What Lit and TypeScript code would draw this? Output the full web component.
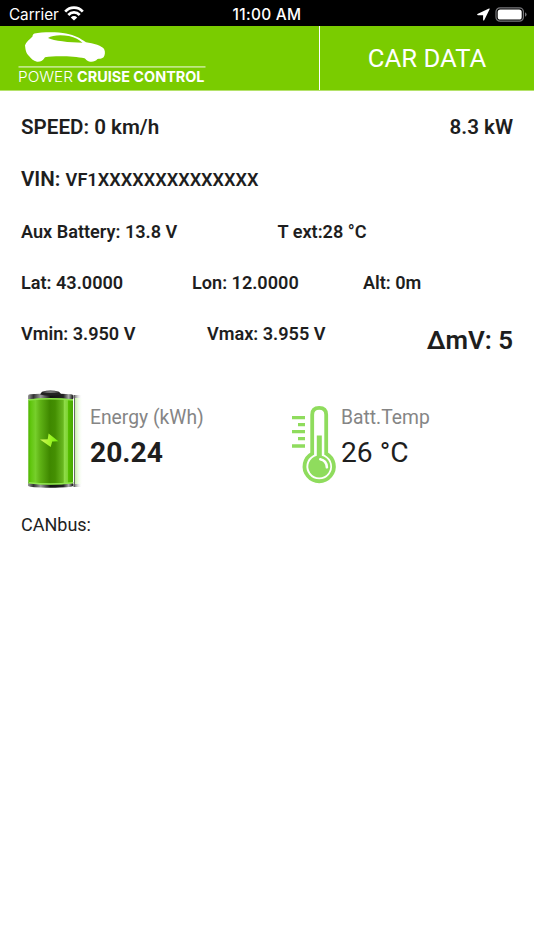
import { LitElement, html, css } from "lit";
import { customElement } from "lit/decorators.js";

@customElement("status-bar")
class StatusBar extends LitElement {
  static styles = css`
    :host { display: grid; grid-template-columns: 1fr auto 1fr; align-items: center; height: 26px; background: #000; color: #fff; font: 15.3px/26px Inter, sans-serif; }
    .left { display: flex; align-items: center; padding-left: 9px; gap: 5.5px; }
    .carrier { padding-top: 2px; letter-spacing: -.05px; }
    .time { font-weight: 500; padding-top: 2px; font-size: 15.4px; letter-spacing: .3px; }
    .right { display: flex; justify-content: flex-end; align-items: center; gap: 5px; padding-right: 7px; }
    svg { display: block; }
  `;
  render() {
    return html`
      <div class="left">
        <span class="carrier">Carrier</span>
        <svg width="20" height="16" viewBox="0 0 20 16" fill="none" stroke="#fff" stroke-width="2.7">
          <path d="M1.2 5.6C6 .4 14 .4 18.800 5.600" />
          <path d="M4.300 9C7.500 5.500 12.500 5.500 15.700 9" />
          <path d="M10 14.400L6.800 11.400C8.600 9.600 11.400 9.600 13.200 11.400Z" fill="#fff" stroke="none" />
        </svg>
      </div>
      <span class="time">11:00 AM</span>
      <div class="right">
        <svg width="13" height="13" viewBox="0 0 13 13"><path d="M.4 6L12 .5Q13 .2 12.600 1.300L7.200 12.200Q6.400 13.100 6.100 12V7.200H.9Q-.4 6.800 .4 6Z" fill="#fff" /></svg>
        <svg width="32" height="15" viewBox="0 0 32 15">
          <rect x="1" y=".8" width="27.4" height="13.4" rx="4" fill="none" stroke="#77777b" stroke-width="1.2" />
          <rect x="2.7" y="2.4" width="24" height="10.2" rx="2.6" fill="#fff" />
          <path d="M30 5.2Q31.6 6 31.6 7.5T30 9.8Z" fill="#77777b" />
        </svg>
      </div>
    `;
  }
}

@customElement("app-header")
class AppHeader extends LitElement {
  static styles = css`
    :host { display: flex; box-sizing: border-box; height: 65px; background: #7acc00; border-bottom: 1px solid #b4e26a; color: #fff; }
    .brand { flex: 0 0 320px; border-right: 1px solid #fff; box-sizing: border-box; }
    .title { flex: 1; display: flex; align-items: center; justify-content: center; font: 25.7px/66px Roboto, sans-serif; }
    svg { display: block; }
    .word { font-family: Inter, sans-serif; font-size: 14.2px; fill: #fff; }
    .thin { font-weight: 300; }
    .bold { font-weight: 700; }
  `;
  render() {
    return html`
      <div class="brand">
        <svg width="220" height="64" viewBox="0 26 220 64">
          <path fill="#fff" fill-rule="evenodd" d="M34.500 33.500C42 31.800 58 31.800 66 33.400C75 35 80 38 86 42.300C93 43.400 102.600 45.700 104.300 49.500C105.400 52 105 55 103.600 57.200C101.500 59.200 99 58.500 97.500 59C95.500 61.500 92 62.400 89 61.400C86.500 60.400 86 59.300 84.500 58.200C74 56 55 55.400 45 57.200C43 60.500 40.500 62 37 61.700C33 61 31 58.500 29 56C26.300 53.500 25.600 51 25 45.300C26 42 29.500 39.400 32.500 36.500C32.600 35 33 34 34.500 33.500ZM48 38C52 35.200 61 34.700 69 36.100C75 37.300 79.500 40.200 82.500 42.800C69 42.400 54 41 48 38Z" />
          <rect x="18.500" y="66.200" width="187" height="1.400" fill="#fff" opacity=".65" />
          <text class="word thin" x="18" y="82.200" textLength="55" lengthAdjust="spacingAndGlyphs">POWER</text>
          <text class="word bold" x="77" y="82.200" textLength="127.500" lengthAdjust="spacingAndGlyphs">CRUISE CONTROL</text>
        </svg>
      </div>
      <div class="title">CAR DATA</div>
    `;
  }
}

@customElement("battery-icon")
class BatteryIcon extends LitElement {
  static styles = css`:host, svg { display: block; }`;
  render() {
    return html`<svg width="58" height="100" viewBox="26 389 58 100">
      <defs>
        <linearGradient id="metal"><stop offset="0" stop-color="#999" /><stop offset=".12" stop-color="#333" /><stop offset=".28" stop-color="#999" /><stop offset=".5" stop-color="#111" /><stop offset=".78" stop-color="#222" /><stop offset=".9" stop-color="#aaa" /><stop offset="1" stop-color="#111" /></linearGradient>
        <linearGradient id="cell"><stop offset="0" stop-color="#4fb500" /><stop offset=".06" stop-color="#62c610" /><stop offset=".16" stop-color="#76cf2b" /><stop offset=".26" stop-color="#60b316" /><stop offset=".48" stop-color="#3f8800" /><stop offset=".6" stop-color="#448f02" /><stop offset=".78" stop-color="#69b820" /><stop offset=".81" stop-color="#8fdc48" /><stop offset=".88" stop-color="#7ed434" /><stop offset=".9" stop-color="#55bd00" /><stop offset="1" stop-color="#46a700" /></linearGradient>
        <linearGradient id="glow"><stop offset="0" stop-color="#b7ec8d" /><stop offset="1" stop-color="#fff" stop-opacity="0" /></linearGradient>
        <linearGradient id="shade"><stop offset="0" stop-color="#555" /><stop offset="1" stop-color="#fff" stop-opacity="0" /></linearGradient>
        <linearGradient id="bolt"><stop offset="0" stop-color="#d8f45e" /><stop offset=".5" stop-color="#a5f52b" /><stop offset="1" stop-color="#74ef08" /></linearGradient>
      </defs>
      <rect x="74" y="398" width="9" height="86" fill="url(#glow)" />
      <path d="M73.500 395H82V398H73.500ZM73.500 484H82V487H73.500Z" fill="url(#shade)" />
      <path d="M28 399V396Q28 394.500 30 394.300Q50 392.600 71 394.300Q73.200 394.600 73.200 396V399Z" fill="url(#metal)" />
      <path d="M40 394.500L42 391.800Q50.500 389.400 59 391.800L61.500 394.500Q50.500 397 40 394.500Z" fill="#222" />
      <path d="M42.500 392Q50.500 390 59 392Q50.500 394 42.500 392Z" fill="#777" />
      <path d="M28 482H73.200V486Q71 487.500 50.500 487.700Q30 487.500 28 486Z" fill="url(#metal)" />
      <path d="M28.300 399.500Q50 397 73 399.500V483Q50 486 28.300 483Z" fill="url(#cell)" />
      <path d="M28.500 400Q50 397.500 73 400" fill="none" stroke="#8de34c" stroke-width="1.300" />
      <path d="M28.500 482.700Q50 485.300 73 482.700" fill="none" stroke="#91e650" stroke-width="1.500" />
      <path d="M74.500 395V487" stroke="#666" stroke-width="1" />
      <path d="M48.600 433.600L58.400 441.200L52.200 441.400L50.700 447L40 439.400L47.700 439.200Z" fill="url(#bolt)" />
    </svg>`;
  }
}

@customElement("thermo-icon")
class ThermoIcon extends LitElement {
  static styles = css`:host, svg { display: block; }`;
  render() {
    return html`<svg width="46" height="80" viewBox="291 405 46 80">
      <path d="M292 416H305V419.300H292ZM298 423H305V426.200H298ZM292 430H305V433.300H292ZM298 437H305V440.300H298ZM292 444.300H305V447.700H292Z" fill="#8fdc5d" />
      <path d="M312.200 453.600V414.700Q312.200 407.900 319.200 407.900T326.200 414.700V453.600A14.700 14.700 0 1 1 312.200 453.600Z" fill="#fff" stroke="#8fdc5d" stroke-width="3.800" />
      <path d="M316.800 435.500H321.800V455.800A11 11 0 1 1 316.800 455.800Z" fill="#8fdc5d" />
      <path d="M320.300 459.200Q326.500 460.500 326.900 467.300" fill="none" stroke="#fff" stroke-width="2.600" stroke-linecap="round" />
    </svg>`;
  }
}

@customElement("app-root")
class AppRoot extends LitElement {
  static styles = css`
    :host { display: block; height: 950px; overflow: hidden; background: #fff; color: #1e1e1e; font-family: Roboto, sans-serif; }
    main { padding: 10px 21px 0; }
    .row { display: grid; align-items: center; height: 51.600px; font-size: 18.100px; font-weight: 600; line-height: 26px; white-space: nowrap; }
    .large { font-size: 20.600px; }
    .spread { grid-template-columns: 1fr auto; }
    .halves { grid-template-columns: 256.500px 1fr; padding-top: 3px; height: 49.600px; }
    .thirds { grid-template-columns: 171px 171px 1fr; }
    .cells { grid-template-columns: 186px 1fr auto; height: 51.600px; }
    .vin { display: block; line-height: 53.600px; }
    .code { font-size: 18.150px; }
    .delta { font-size: 25.900px; padding-top: 12px; line-height: 30px; }
    .stats { display: grid; grid-template-columns: 264px 1fr; padding-top: 29px; height: 99px; }
    .stat { display: flex; gap: 6px; padding-left: 5px; }
    .temp { gap: 4px; padding-left: 6px; }
    .temp thermo-icon { padding-top: 16px; }
    .label { font-size: 19.300px; line-height: 24px; color: #858585; padding-top: 17px; }
    .value { font-size: 28.200px; line-height: 36px; padding-top: 5.400px; }
    .strong { font-weight: 700; }
    .bus { font-size: 18px; line-height: 24px; padding-top: 25px; }
  `;
  render() {
    return html`
      <status-bar></status-bar>
      <app-header></app-header>
      <main>
        <div class="row large spread"><span>SPEED: 0 km/h</span><span>8.3 kW</span></div>
        <div class="row large vin">VIN: <span class="code">VF1XXXXXXXXXXXXXX</span></div>
        <div class="row halves"><span>Aux Battery: 13.8 V</span><span>T ext:28 °C</span></div>
        <div class="row thirds"><span>Lat: 43.0000</span><span>Lon: 12.0000</span><span>Alt: 0m</span></div>
        <div class="row cells"><span>Vmin: 3.950 V</span><span>Vmax: 3.955 V</span><span class="delta">ΔmV: 5</span></div>
        <div class="stats">
          <div class="stat">
            <battery-icon></battery-icon>
            <div><div class="label">Energy (kWh)</div><div class="value strong">20.24</div></div>
          </div>
          <div class="stat temp">
            <thermo-icon></thermo-icon>
            <div><div class="label">Batt.Temp</div><div class="value">26 °C</div></div>
          </div>
        </div>
        <div class="bus">CANbus:</div>
      </main>
    `;
  }
}
